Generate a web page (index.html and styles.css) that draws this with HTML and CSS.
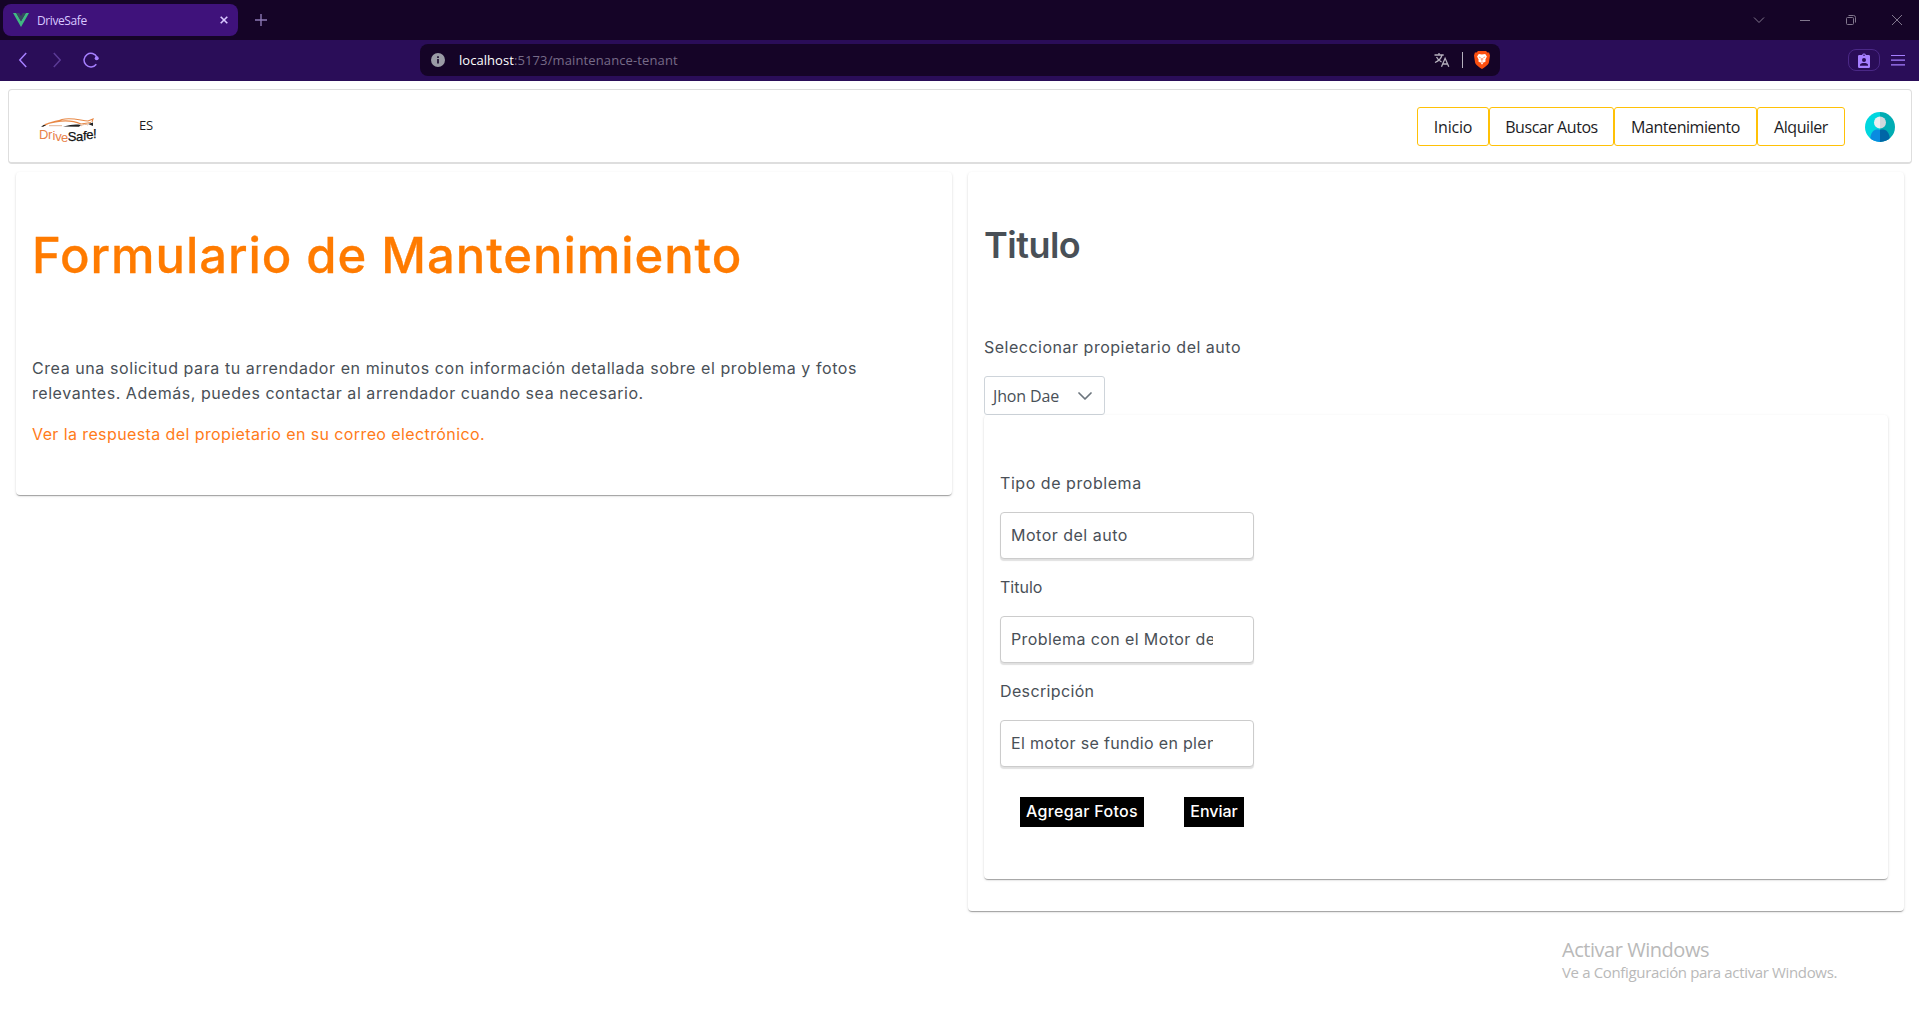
FILE: index.html
```html
<!DOCTYPE html>
<html lang="es">
<head>
<meta charset="utf-8">
<title>DriveSafe</title>
<link rel="stylesheet" href="styles.css">
</head>
<body>
<div class="tabbar">
  <div class="tab">
    <svg class="vue" width="16" height="14" viewBox="0 0 16 14"><path d="M0 0h3.2L8 8.3 12.8 0H16L8 14z" fill="#41b883"/><path d="M3.2 0h3L8 3.1 9.8 0h3L8 8.3z" fill="#35495e"/></svg>
    <span class="tab-title">DriveSafe</span>
    <svg class="tab-close" width="8" height="8" viewBox="0 0 8 8"><path d="M.7.7l6.6 6.6M7.3.7L.7 7.3" stroke="#d9c8ff" stroke-width="1.6"/></svg>
  </div>
  <svg class="new-tab" width="12" height="12" viewBox="0 0 12 12"><path d="M6 0v12M0 6h12" stroke="#8c78b5" stroke-width="1.4"/></svg>
  <div class="window-buttons">
    <svg width="12" height="12" viewBox="0 0 12 12"><path d="M1 3.5l5 5 5-5"/></svg>
    <svg width="12" height="12" viewBox="0 0 12 12"><path d="M1 6.5h10"/></svg>
    <svg width="12" height="12" viewBox="0 0 12 12"><rect x="1.5" y="3.5" width="7" height="7" rx="1"/><path d="M3.5 1.5h5a2 2 0 0 1 2 2v5"/></svg>
    <svg width="12" height="12" viewBox="0 0 12 12"><path d="M1 1l10 10M11 1L1 11"/></svg>
  </div>
</div>
<div class="toolbar">
  <div class="history">
    <svg width="16" height="16" viewBox="0 0 16 16"><path d="M11.2 1L4.8 8l6.4 7" stroke="#a67fff"/></svg>
    <svg width="16" height="16" viewBox="0 0 16 16"><path d="M4.8 1l6.4 7-6.4 7" stroke="#5b3a96"/></svg>
    <svg width="16" height="16" viewBox="0 0 16 16"><path d="M14 5.2A6.8 6.8 0 1 0 13.3 12.2" stroke="#a67fff"/><circle cx="13.7" cy="6.2" r="2" fill="#a67fff"/></svg>
  </div>
  <div class="address">
    <svg class="info" width="14" height="14" viewBox="0 0 14 14"><circle cx="7" cy="7" r="7" fill="#9a9ba5"/><path d="M7 3.2v1.7M7 6v4.5" stroke="#150427" stroke-width="1.6"/></svg>
    <span class="host">localhost</span><span class="path">:5173/maintenance-tenant</span>
    <svg class="translate" width="16" height="16" viewBox="0 0 16 16"><path d="M.5 3h9.2M5 1v2M8 3C7.200 6 4.500 9 1 10.500M2.500 5C3.500 7 5.500 9 7.500 10M7.500 14.800L11.100 6.300l3.700 8.500M8.600 12h5.100" fill="none" stroke="#b5b0bd" stroke-width="1.3"/></svg>
    <span class="divider"></span>
    <svg class="brave" width="16" height="18" viewBox="0 0 16 18"><path d="M4 0h8l1.500 1.500 1.600-.1.900 3-1 6.600c-.4 2.500-2.300 3.800-7 7-4.700-3.200-6.600-4.500-7-7L0 4.400l.9-3 1.600.1z" fill="#fb4f10"/><path d="M4.800 3L8 3.600l3.200-.6 1.700 2.600-1.500 2.900.2 1.900-2.300 1.300L8 13.800l-1.300-2.100-2.300-1.300.2-1.900-1.500-2.900z" fill="#fff"/><path d="M4.800 6l1.800.6M11.200 6l-1.800.6M7.300 7v2l.7.700.7-.7V7M6.500 11.600l1.500-.7 1.500.7" fill="none" stroke="#fb4f10" stroke-width=".6"/></svg>
  </div>
  <div class="profile"><svg width="12" height="15" viewBox="0 0 12 15"><path d="M1.300 2h2.800a2 2 0 0 1 3.800 0h2.800A1.300 1.300 0 0 1 12 3.300v10.400a1.300 1.300 0 0 1-1.300 1.300H1.300A1.300 1.300 0 0 1 0 13.700V3.300A1.300 1.300 0 0 1 1.300 2z" fill="#a67fff"/><circle cx="6" cy="2.200" r=".8" fill="#2a0d58"/><circle cx="6" cy="7" r="2" fill="#2a0d58"/><path d="M2 12.800v-1c0-2.400 8-2.400 8 0v1z" fill="#2a0d58"/></svg></div>
  <svg class="menu" width="14" height="12" viewBox="0 0 14 12"><path d="M0 1.500h14M0 6.200h14M0 10.800h14" stroke="#a67fff" stroke-width="1.200"/></svg>
</div>
<header class="site-header">
  <svg class="logo" width="60" height="28" viewBox="0 0 60 28">
    <path d="M4 8C12 3 17 4 23 1.500 33-1 43 3 49 3l5-2-1 3M6 6.500C20 2 33 2 42 6l10-1.500" fill="none" stroke="#e88845" stroke-width="1.100"/>
    <path d="M2 8.800l3-2 2 .4-3 1.600zM24 8.500c8-1.500 11-2.700 18-1.600l-2 1.900zM49 6l5-1.500v3.500z" fill="#222"/>
    <path d="M10 7.700h13M42 8c2-2 5-2 7-1" fill="none" stroke="#d9a27c" stroke-width=".8"/>
    <g class="logo-text" font-size="13"><text fill="#e8824a"><tspan x="0" y="20.500">D</tspan><tspan x="9" y="21">r</tspan><tspan x="13.500" y="21.800">i</tspan><tspan x="16.300" y="22.700">v</tspan><tspan x="22" y="23.500">e</tspan></text><text fill="#111" stroke="#111" stroke-width=".25"><tspan x="28.800" y="23.300">S</tspan><tspan x="37" y="22.600">a</tspan><tspan x="44" y="21.800">f</tspan><tspan x="47.300" y="21">e</tspan><tspan x="54" y="20">!</tspan></text></g>
  </svg>
  <span class="lang">ES</span>
  <nav class="nav">
    <a class="nav-link home">Inicio</a><a class="nav-link search">Buscar Autos</a><a class="nav-link upkeep">Mantenimiento</a><a class="nav-link rent">Alquiler</a>
  </nav>
  <svg class="avatar" width="30" height="30" viewBox="0 0 30 30">
    <defs><clipPath id="disc"><circle cx="15" cy="15" r="15"/></clipPath></defs>
    <g clip-path="url(#disc)"><path d="M0 0h15v30H0z" fill="#00d7df"/><path d="M15 0h15v30H15z" fill="#00acb3"/><path d="M5 30c0-16 10-12 10-12v12z" fill="#0a8be0"/><path d="M25 30c0-16-10-12-10-12v12z" fill="#0066a6"/><path d="M15 4.500a6 6 0 0 0 0 12z" fill="#eceff1"/><path d="M15 4.500a6 6 0 0 1 0 12z" fill="#cfd8dc"/></g>
  </svg>
</header>
<main class="columns">
  <section class="card intro">
    <h1 class="headline">Formulario de Mantenimiento</h1>
    <p class="copy"><span class="copy-first">Crea una solicitud para tu arrendador en minutos con información detallada sobre el problema y fotos</span><br><span class="copy-second">relevantes. Además, puedes contactar al arrendador cuando sea necesario.</span></p>
    <p class="notice">Ver la respuesta del propietario en su correo electrónico.</p>
  </section>
  <section class="card request">
    <h2 class="request-title">Titulo</h2>
    <p class="owner-label">Seleccionar propietario del auto</p>
    <div class="dropdown"><span>Jhon Dae</span><svg width="14" height="8" viewBox="0 0 14 8"><path d="M1 1l6 6 6-6" fill="none" stroke="#6c757d" stroke-width="1.700" stroke-linecap="round" stroke-linejoin="round"/></svg></div>
    <form class="card problem">
      <label class="field"><span class="wide">Tipo de problema</span><input class="kind" type="text" value="Motor del auto"></label>
      <label class="field"><span>Titulo</span><input class="subject" type="text" value="Problema con el Motor del auto"></label>
      <label class="field"><span class="medium">Descripción</span><input type="text" value="El motor se fundio en plena via"></label>
      <div class="actions"><button class="photos" type="button">Agregar Fotos</button><button class="send" type="button">Enviar</button></div>
    </form>
  </section>
</main>
<aside class="watermark"><div class="watermark-title">Activar Windows</div><div class="watermark-text">Ve a Configuración para activar Windows.</div></aside>
</body>
</html>
```
FILE: styles.css
```css
* { box-sizing: border-box; }
body { margin: 0; height: 1026px; overflow: hidden; background: #fff; color: #495057; font: 16px/25px "Inter", sans-serif; }
svg { display: block; flex: none; }
h1, h2, p { margin: 0; white-space: nowrap; }

.tabbar { display: flex; align-items: center; height: 40px; padding: 0 16px 0 3px; background: #150427; font-family: "Open Sans", sans-serif; }
.tab { display: flex; align-items: center; width: 235px; height: 32px; padding: 0 10px; border-radius: 8px; background: #3f127b; color: #d9c8ff; font-size: 12px; }
.tab-title { margin-left: 8px; letter-spacing: -.4px; }
.tab-close { margin-left: auto; }
.new-tab { margin-left: 17px; }
.window-buttons { display: flex; gap: 34px; margin-left: auto; }
.window-buttons svg { fill: none; stroke: #81778d; stroke-width: 1; }

.toolbar { display: flex; align-items: center; height: 41px; padding: 0 14px 1px 0; background: #2a0d58; }
.history { display: flex; gap: 18px; width: 420px; padding-left: 15px; }
.history svg { fill: none; stroke-width: 1.5; }
.address { display: flex; align-items: center; width: 1080px; height: 32px; padding: 0 10px 0 11px; border-radius: 8px; background: #150427; font: 13px/20px "Open Sans", sans-serif; }
.host { margin-left: 14px; color: #fff; letter-spacing: .05px; }
.path { color: #776b88; letter-spacing: .12px; }
.translate { margin-left: auto; }
.divider { width: 1px; height: 16px; margin: 0 11px 0 12px; background: #b5b0bd; }
.profile { display: grid; place-items: center; width: 32px; height: 22px; margin-left: auto; border: 1px solid #4a2886; border-radius: 8px; }
.menu { margin-left: 11px; }

.site-header { display: flex; align-items: center; height: 75px; margin: 8px 7px 0 8px; padding: 0 16px 0 30px; border: 1px solid #dedede; border-bottom-width: 2px; border-radius: 4px; font-family: "Open Sans", sans-serif; color: #1c1c24; }
.logo { margin-top: 12px; }
.avatar { margin-top: 2px; }
.logo-text { font-family: "Liberation Sans", sans-serif; }
.lang { margin: 0 0 1px 40px; font-size: 13px; letter-spacing: -.2px; }
.nav { display: flex; margin-left: auto; margin-right: 20px; }
.nav-link { height: 39px; border: 1px solid #ffc107; border-radius: 3px; font-size: 16px; line-height: 38px; text-align: center; letter-spacing: -.45px; }
.home { width: 72px; letter-spacing: -.2px; }
.search { width: 125px; }
.upkeep { width: 143px; }
.rent { width: 88px; }

.columns { display: flex; align-items: flex-start; gap: 16px; padding: 8px 15px 0 16px; }
.card { border-radius: 4px; background: #fff; box-shadow: 0 2px 1px -1px rgba(0,0,0,.2), 0 1px 1px rgba(0,0,0,.14), 0 1px 3px rgba(0,0,0,.12); }
.intro { width: 936px; height: 323px; padding: 54px 16px 0; }
.headline { margin-bottom: 70px; color: #ff7b00; font-size: 49px; font-weight: 500; line-height: 60px; letter-spacing: .94px; -webkit-text-stroke: .3px #ff7b00; }
.copy-first { letter-spacing: .578px; }
.copy-second { letter-spacing: .547px; }
.notice { margin-top: 16px; color: #ff7b1a; letter-spacing: .4px; }
.request { width: 936px; height: 739px; padding: 53px 16px 0; }
.request-title { margin-bottom: 89px; font-size: 36px; font-weight: 600; line-height: 40px; letter-spacing: -.5px; }
.owner-label { margin-top: -19px; letter-spacing: .506px; }
.dropdown { display: flex; align-items: center; justify-content: space-between; width: 121px; height: 39px; margin-top: 16px; padding: 1px 12px 0 8px; border: 1px solid #ced4da; border-radius: 3px; font-family: "Open Sans", sans-serif; letter-spacing: -.15px; }
.problem { width: 904px; height: 464px; padding: 56px 16px 0; }
.field { display: flex; flex-direction: column; align-items: flex-start; gap: 16px; margin-bottom: 16px; }
.wide { letter-spacing: .55px; }
.medium { letter-spacing: .36px; }
.field input { width: 254px; height: 47px; padding: 0 40px 1px 10px; border: 1px solid #ccc; border-radius: 4px; background: #fff; box-shadow: 0 2px 1px rgba(0,0,0,.12); color: #495057; font: 16px "Inter", sans-serif; letter-spacing: .32px; }
.field .kind { letter-spacing: .5px; }
.field .subject { letter-spacing: .4px; }
.actions { display: flex; gap: 40px; padding: 14px 20px 0; }
.actions button { height: 30px; padding: 0 0 2px; border: 0; background: #000; color: #fff; font: 500 16px "Inter", sans-serif; }
.actions .photos { width: 124px; letter-spacing: .31px; }
.actions .send { width: 60px; }

.watermark { position: absolute; left: 1562px; top: 936px; color: #b9b9b9; font-family: "Open Sans", sans-serif; white-space: nowrap; }
.watermark-title { font-size: 20px; line-height: 28px; letter-spacing: -.46px; }
.watermark-text { margin-top: -2px; font-size: 15px; line-height: 20px; letter-spacing: -.35px; }
```
